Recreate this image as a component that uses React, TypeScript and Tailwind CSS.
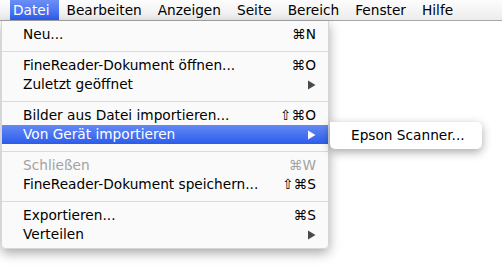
const font = { fontFamily: '"DejaVu Sans", "Liberation Sans", sans-serif' };

type Item =
  | { sep: true }
  | { label: string; shortcut?: string; arrow?: boolean; disabled?: boolean; active?: boolean };

const items: Item[] = [
  { label: 'Neu...', shortcut: '⌘N' },
  { sep: true },
  { label: 'FineReader-Dokument öffnen...', shortcut: '⌘O' },
  { label: 'Zuletzt geöffnet', arrow: true },
  { sep: true },
  { label: 'Bilder aus Datei importieren...', shortcut: '⇧⌘O' },
  { label: 'Von Gerät importieren', arrow: true, active: true },
  { sep: true },
  { label: 'Schließen', shortcut: '⌘W', disabled: true },
  { label: 'FineReader-Dokument speichern...', shortcut: '⇧⌘S' },
  { sep: true },
  { label: 'Exportieren...', shortcut: '⌘S' },
  { label: 'Verteilen', arrow: true },
];

const bar = ['Bearbeiten', 'Anzeigen', 'Seite', 'Bereich', 'Fenster', 'Hilfe'];

function Arrow({ white }: { white?: boolean }) {
  return (
    <svg width="9" height="10" viewBox="0 0 9 10">
      <path d="M1 0.5 L8.5 5 L1 9.5 Z" fill={white ? '#ffffff' : '#4a4a4a'} />
    </svg>
  );
}

export default function App() {
  return (
    <div className="relative w-[502px] h-[269px] overflow-hidden bg-white text-[13.7px] text-black" style={font}>
      <div className="flex h-[21px] items-stretch border-b border-[#a8a8a8] bg-gradient-to-b from-[#fdfdfd] to-[#ececec]">
        <div className="ml-[10px] flex items-center pl-[3px] pr-[9px] bg-gradient-to-b from-[#6c8ff6] to-[#2f5ef0] text-white">
          Datei
        </div>
        {bar.map((b) => (
          <div key={b} className="flex items-center px-[8px]">
            {b}
          </div>
        ))}
      </div>

      <div className="absolute left-[1px] top-[21px] w-[328px] rounded-b-[5px] bg-[#fafafa]/95 py-[4px] shadow-[0_4px_12px_rgba(0,0,0,0.35)] border-x border-b border-[#d6d6d6]">
        {items.map((it, i) =>
          'sep' in it ? (
            <div key={i} className="h-[12px] pt-[7px]">
              <div className="h-px bg-[#dadada]" />
            </div>
          ) : (
            <div
              key={i}
              className={
                'flex h-[19px] items-center pl-[21px] pr-[12px] ' +
                (it.active
                  ? 'bg-gradient-to-b from-[#6489f5] to-[#2c5bea] text-white'
                  : it.disabled
                  ? 'text-[#a3a3a3]'
                  : '')
              }
            >
              <span className="flex-1">{it.label}</span>
              {it.shortcut && <span>{it.shortcut}</span>}
              {it.arrow && <Arrow white={it.active} />}
            </div>
          )
        )}
      </div>

      <div className="absolute left-[330px] top-[122px] flex h-[27px] w-[152px] items-center rounded-[5px] rounded-tl-none bg-white pl-[21px] shadow-[0_3px_10px_rgba(0,0,0,0.35)]">
        Epson Scanner...
      </div>
    </div>
  );
}
